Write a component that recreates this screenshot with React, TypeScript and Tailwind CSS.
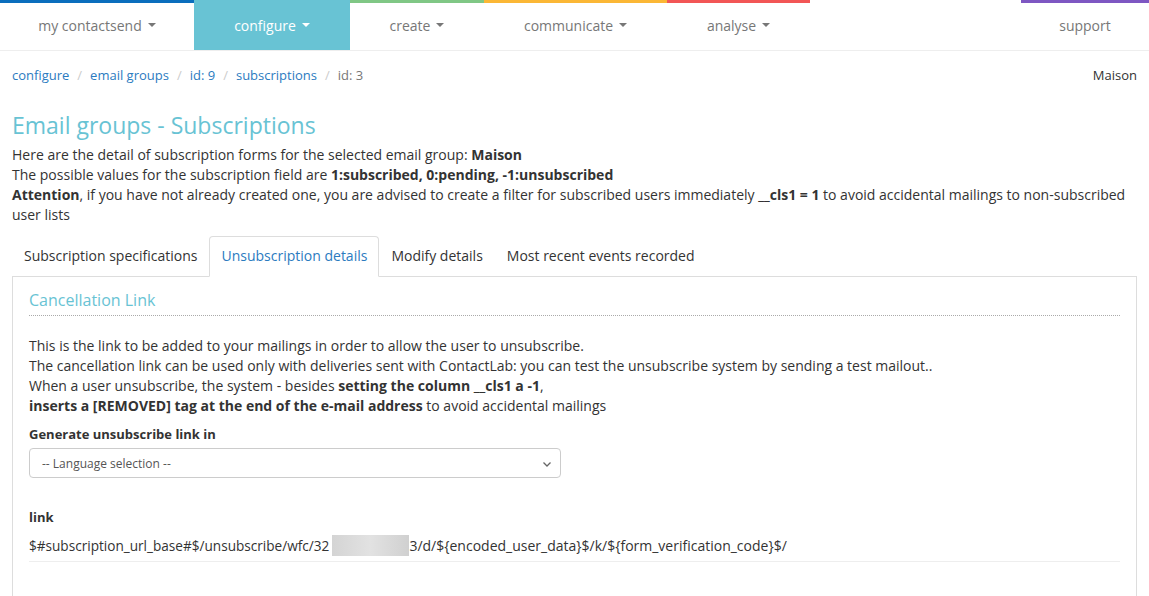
import React from "react";

const navItems = [
  { label: "my contactsend", width: "w-[194px]", bar: "bg-[#0a6ebd]", caret: true },
  { label: "configure", width: "w-[156px]", bar: "", caret: true, active: true },
  { label: "create", width: "w-[134px]", bar: "bg-[#80c785]", caret: true },
  { label: "communicate", width: "w-[183px]", bar: "bg-[#fbb735]", caret: true },
  { label: "analyse", width: "w-[143px]", bar: "bg-[#f25656]", caret: true },
];

const tabs = [
  "Subscription specifications",
  "Unsubscription details",
  "Modify details",
  "Most recent events recorded",
];

function Caret({ light }: { light?: boolean }) {
  return (
    <span
      className={`ml-[6px] inline-block h-0 w-0 border-x-[4px] border-t-[4px] border-x-transparent align-middle ${
        light ? "border-t-white" : "border-t-[#777]"
      }`}
    />
  );
}

function NavBar() {
  return (
    <div className="flex h-[51px] border-b border-[#eee]">
      {navItems.map((item) => (
        <div
          key={item.label}
          className={`${item.width} flex flex-col ${item.active ? "bg-[#68c3d4]" : ""}`}
        >
          <div className={`h-[3px] ${item.bar}`} />
          <div
            className={`flex flex-1 items-center justify-center pb-[3px] text-[14px] ${
              item.active ? "text-white" : "text-[#777]"
            }`}
          >
            {item.label}
            {item.caret && <Caret light={item.active} />}
          </div>
        </div>
      ))}
      <div className="flex-1" />
      <div className="flex w-[128px] flex-col">
        <div className="h-[3px] bg-[#7e57c2]" />
        <div className="flex flex-1 items-center justify-center pb-[3px] text-[14px] text-[#777]">
          support
        </div>
      </div>
    </div>
  );
}

function Breadcrumb() {
  const sep = <span className="px-[8px] text-[#ccc]">/</span>;
  return (
    <div className="flex h-[48px] items-center justify-between px-3 pt-[2px] text-[13px]">
      <div className="flex items-center text-[#2b7bbf]">
        <span>configure</span>
        {sep}
        <span>email groups</span>
        {sep}
        <span>id: 9</span>
        {sep}
        <span>subscriptions</span>
        {sep}
        <span className="text-[#777]">id: 3</span>
      </div>
      <div className="text-[#333]">Maison</div>
    </div>
  );
}

export default function App() {
  return (
    <div
      className="min-h-[596px] bg-white text-[#333]"
      style={{ fontFamily: "'Open Sans', 'Liberation Sans', sans-serif" }}
    >
      <NavBar />
      <Breadcrumb />
      <div className="px-3">
        <h1 className="mt-[11px] text-[23px] leading-[31px] text-[#68c3d4]">
          Email groups - Subscriptions
        </h1>
        <div className="mt-[4px] text-[14px] leading-[20px]">
          <p>
            Here are the detail of subscription forms for the selected email group: <b>Maison</b>
          </p>
          <p>
            The possible values for the subscription field are{" "}
            <b>1:subscribed, 0:pending, -1:unsubscribed</b>
          </p>
          <p>
            <b>Attention</b>, if you have not already created one, you are advised to create a
            filter for subscribed users immediately <b>__cls1 = 1</b> to avoid accidental mailings
            to non-subscribed user lists
          </p>
        </div>

        <div className="mt-[11px] flex h-[41px] border-b border-[#ddd]">
          {tabs.map((t, i) => (
            <div
              key={t}
              className={`-mb-[1px] flex items-center rounded-t-[4px] border px-[11px] pb-[2px] text-[14px] ${
                i === 1
                  ? "border-[#ddd] border-b-white bg-white text-[#2b7bbf]"
                  : "border-transparent text-[#333]"
              }`}
            >
              {t}
            </div>
          ))}
        </div>

        <div className="border-x border-[#ddd] px-4 pb-10 pt-3">
          <div className="border-b border-dotted border-[#aaa] pb-[4px] text-[16px] leading-[22px] text-[#68c3d4]">
            Cancellation Link
          </div>
          <div className="mt-[20px] text-[14px] leading-[20px]">
            <p>This is the link to be added to your mailings in order to allow the user to unsubscribe.</p>
            <p>
              The cancellation link can be used only with deliveries sent with ContactLab: you can
              test the unsubscribe system by sending a test mailout..
            </p>
            <p>
              When a user unsubscribe, the system - besides <b>setting the column __cls1 a -1</b>,
            </p>
            <p>
              <b>inserts a [REMOVED] tag at the end of the e-mail address</b> to avoid accidental
              mailings
            </p>
          </div>

          <div className="mt-[9px] text-[13px] font-bold leading-[18px]">
            Generate unsubscribe link in
          </div>
          <div className="mt-[5px] flex h-[30px] w-[532px] items-center justify-between rounded-[4px] border border-[#ccc] pl-3 pr-[8px] pt-[2px] text-[12px] text-[#555]">
            <span>-- Language selection --</span>
            <svg width="10" height="10" viewBox="0 0 10 10" fill="none">
              <path d="M1.5 3.5 L5 7 L8.5 3.5" stroke="#666" strokeWidth="1.3" />
            </svg>
          </div>

          <div className="mt-[30px] text-[13px] font-bold leading-[18px]">link</div>
          <div className="mt-[9px] flex items-center border-b border-[#eee] pb-[5px] leading-[20px] text-[#333]">
            <span className="text-[13.6px]">$#subscription_url_base#$/unsubscribe/wfc/32</span>
            <span className="ml-[3px] inline-block h-[21px] w-[77px] bg-gradient-to-r from-[#d4d4d4] via-[#e2e2e2] to-[#d0d0d0]" />
            <span className="text-[14px]">3/d/${"{encoded_user_data}"}$/k/${"{form_verification_code}"}$/</span>
          </div>
        </div>
      </div>
    </div>
  );
}
